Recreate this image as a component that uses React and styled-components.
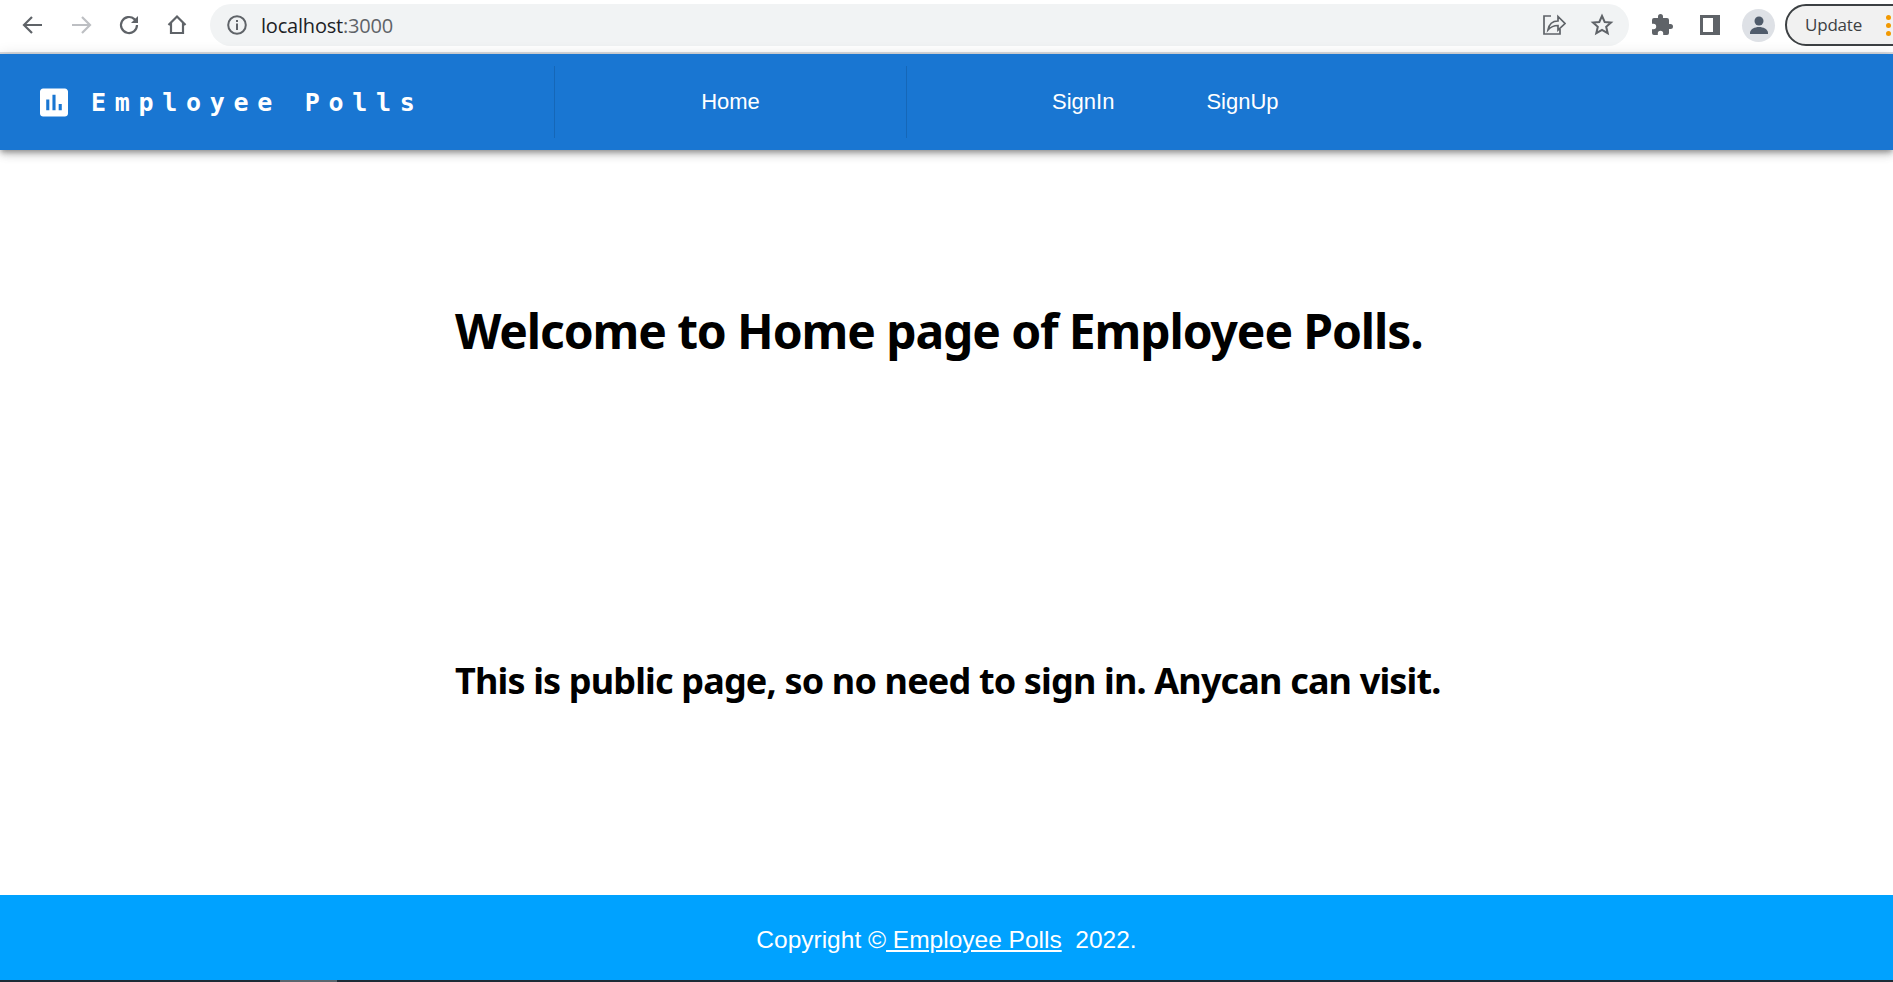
import styled, { createGlobalStyle } from 'styled-components';

const GlobalStyle = createGlobalStyle`
    html, body, #root {
        margin: 0;
        height: 100%;
    }
    body {
        background: #fff;
        overflow: hidden;
    }
`;

const Page = styled.div`
    display: flex;
    flex-direction: column;
    height: 982px;
    overflow: hidden;
`;

const BrowserBar = styled.div`
    display: flex;
    align-items: center;
    flex: none;
    height: 54px;
    padding: 0 0 2px 21px;
    box-sizing: border-box;
    border-bottom: 2px solid #dadce0;
`;

const NavIcon = styled.svg`
    flex: none;
    width: 24px;
    height: 24px;
    margin-right: 24px;
    fill: none;
    stroke: ${(props) => (props.$muted ? '#bdbfc3' : '#5f6368')};
    stroke-width: 2.2;
`;

const AddressBar = styled.div`
    display: flex;
    align-items: center;
    flex: none;
    width: 1419px;
    height: 42px;
    margin-left: -3px;
    padding: 0 15px 0 16px;
    box-sizing: border-box;
    border-radius: 21px;
    background: #f1f3f4;
`;

const InfoIcon = styled.svg`
    flex: none;
    width: 22px;
    height: 22px;
    margin-right: 13px;
`;

const Url = styled.div`
    flex: 1;
    font: 20px "Open Sans", sans-serif;
    letter-spacing: -0.2px;
    color: #5f6368;

    b {
        font-weight: 400;
        color: #202124;
    }
`;

const AddressIcon = styled.svg`
    flex: none;
    width: 24px;
    height: 24px;
    margin-left: 24px;
    fill: none;
    stroke: #5f6368;
    stroke-width: 1.7;
`;

const ToolIcon = styled.svg`
    flex: none;
    width: 24px;
    height: 24px;
    margin-left: ${(props) => props.$gap}px;
    fill: #5f6368;
`;

const Avatar = styled.div`
    display: flex;
    align-items: center;
    justify-content: center;
    flex: none;
    width: 33px;
    height: 33px;
    margin-left: 20px;
    border-radius: 50%;
    background: #dee1e6;
`;

const UpdateButton = styled.div`
    display: flex;
    align-items: center;
    flex: none;
    width: 130px;
    height: 42px;
    margin-left: 10px;
    padding-left: 18px;
    gap: 24px;
    box-sizing: border-box;
    border: 2px solid #3c4043;
    border-radius: 21px;
    background: #f1f1f1;
    font: 17px/20px "Open Sans", sans-serif;
    letter-spacing: -0.2px;
    color: #3c4043;
`;

const Dots = styled.div`
    display: flex;
    flex-direction: column;
    gap: 3px;

    i {
        display: block;
        width: 5px;
        height: 5px;
        border-radius: 50%;
        background: #f29900;
    }
`;

const AppBar = styled.header`
    position: relative;
    z-index: 1;
    display: flex;
    align-items: center;
    flex: none;
    height: 96px;
    background: #1976d2;
    box-shadow: 0 3px 5px -1px rgba(0, 0, 0, 0.3), 0 5px 8px rgba(0, 0, 0, 0.14), 0 1px 14px rgba(0, 0, 0, 0.12);
    color: #fff;
`;

const Brand = styled.div`
    display: flex;
    align-items: center;
    flex: none;
    width: 554px;
    padding-left: 40px;
    box-sizing: border-box;
`;

const Logo = styled.svg`
    flex: none;
    width: 28px;
    height: 29px;
    margin-right: 23px;
    fill: #fff;
`;

const BrandName = styled.div`
    font: 700 25px "DejaVu Sans Mono", monospace;
    letter-spacing: 8.7px;
    white-space: nowrap;
`;

const Divider = styled.div`
    flex: none;
    width: 1px;
    height: 72px;
    background: rgba(0, 0, 0, 0.12);
`;

const HomeSlot = styled.div`
    flex: none;
    width: 351px;
    text-align: center;
`;

const NavLink = styled.a`
    font: 400 22px "Liberation Sans", sans-serif;
    color: #fff;
    text-decoration: none;
    margin-left: ${(props) => props.$gap || 0}px;
`;

const Main = styled.main`
    display: flex;
    flex: 1;
    flex-direction: column;
    padding-left: 455px;
    color: #000;
`;

const Title = styled.h1`
    margin: 148px 0 0;
    font: 700 48px/66px "Noto Sans", sans-serif;
    letter-spacing: -1.12px;
`;

const Subtitle = styled.h2`
    margin: 292px 0 0;
    font: 700 36px/50px "Noto Sans", sans-serif;
    letter-spacing: -0.84px;
`;

const Footer = styled.footer`
    display: flex;
    align-items: center;
    justify-content: center;
    flex: none;
    height: 85px;
    padding-top: 4px;
    box-sizing: border-box;
    background: #00a2ff;
    font: 24.5px "Liberation Sans", sans-serif;
    color: #fff;
    white-space: pre;

    a {
        color: #fff;
        text-decoration: underline;
    }
`;

const BottomEdge = styled.div`
    display: flex;
    flex: none;
    height: 2px;
    background: #1d2b36;
`;

const EdgeGap = styled.div`
    width: 57px;
    margin-left: 280px;
    background: #5b666e;
`;

export default function App() {
    return (
        <Page>
            <GlobalStyle />
            <BrowserBar>
                <NavIcon viewBox="0 0 24 24"><path d="M21 12H4M11 4l-8 8 8 8" /></NavIcon>
                <NavIcon viewBox="0 0 24 24" $muted><path d="M3 12h17M13 4l8 8-8 8" /></NavIcon>
                <NavIcon viewBox="0 0 24 24"><path d="M20 12a8 8 0 1 1-2.600-5.900L20 8.500" /><path fill="#5f6368" stroke="none" d="M21 3v7h-7z" /></NavIcon>
                <NavIcon viewBox="0 0 24 24"><path d="M3.500 12 12 3.500l8.500 8.500M6 10v10h12V10" /></NavIcon>
                <AddressBar>
                    <InfoIcon viewBox="0 0 22 22">
                        <circle cx="11" cy="11" r="8.800" fill="none" stroke="#5f6368" strokeWidth="2" />
                        <rect x="10" y="9.500" width="2" height="6.500" fill="#5f6368" />
                        <rect x="10" y="6" width="2" height="2" fill="#5f6368" />
                    </InfoIcon>
                    <Url><b>localhost</b>:3000</Url>
                    <AddressIcon viewBox="0 0 24 24"><path d="M9 3H2v18h16v-5M6 17c1-6 5-9 10-9V3.500l7 7-7 6.500v-4.500c-4 0-7 1-10 4.500z" /></AddressIcon>
                    <AddressIcon viewBox="0 0 24 24"><path strokeWidth="2" d="m12 3 2.700 6 6.300.6-4.800 4.200 1.500 6.400-5.700-3.400-5.700 3.400 1.500-6.400L3 9.600 9.300 9z" /></AddressIcon>
                </AddressBar>
                <ToolIcon viewBox="0 0 24 24" $gap={21}>
                    <path d="M20.500 11H19V7a2 2 0 0 0-2-2h-4V3.500a2.500 2.500 0 0 0-5 0V5H4a2 2 0 0 0-2 2v3.800h1.500a2.700 2.700 0 0 1 0 5.400H2V20a2 2 0 0 0 2 2h3.800v-1.500a2.700 2.700 0 0 1 5.400 0V22H17a2 2 0 0 0 2-2v-4h1.500a2.500 2.500 0 0 0 0-5z" />
                </ToolIcon>
                <ToolIcon viewBox="0 0 24 24" $gap={24}>
                    <path fillRule="evenodd" d="M2 2h20v20H2zM5 5v14h10V5z" />
                </ToolIcon>
                <Avatar>
                    <svg width="24" height="24" viewBox="0 0 24 24" fill="#4f5b6b">
                        <circle cx="12" cy="8" r="4.500" />
                        <path d="M3 20c0-4 5-6 9-6s9 2 9 6v1H3z" />
                    </svg>
                </Avatar>
                <UpdateButton>
                    Update
                    <Dots><i /><i /><i /></Dots>
                </UpdateButton>
            </BrowserBar>
            <AppBar>
                <Brand>
                    <Logo viewBox="3 3 18 18">
                        <path d="M19 3H5c-1.100 0-2 .9-2 2v14c0 1.100.9 2 2 2h14c1.100 0 2-.9 2-2V5c0-1.100-.9-2-2-2zM9 17H7v-7h2v7zm4 0h-2V7h2v10zm4 0h-2v-4h2v4z" />
                    </Logo>
                    <BrandName>Employee Polls</BrandName>
                </Brand>
                <Divider />
                <HomeSlot><NavLink href="#">Home</NavLink></HomeSlot>
                <Divider />
                <NavLink href="#" $gap={145}>SignIn</NavLink>
                <NavLink href="#" $gap={92}>SignUp</NavLink>
            </AppBar>
            <Main>
                <Title>Welcome to Home page of Employee Polls.</Title>
                <Subtitle>This is public page, so no need to sign in. Anycan can visit.</Subtitle>
            </Main>
            <Footer>
                Copyright ©<a href="#"> Employee Polls</a>{'  2022.'}
            </Footer>
            <BottomEdge><EdgeGap /></BottomEdge>
        </Page>
    );
}
